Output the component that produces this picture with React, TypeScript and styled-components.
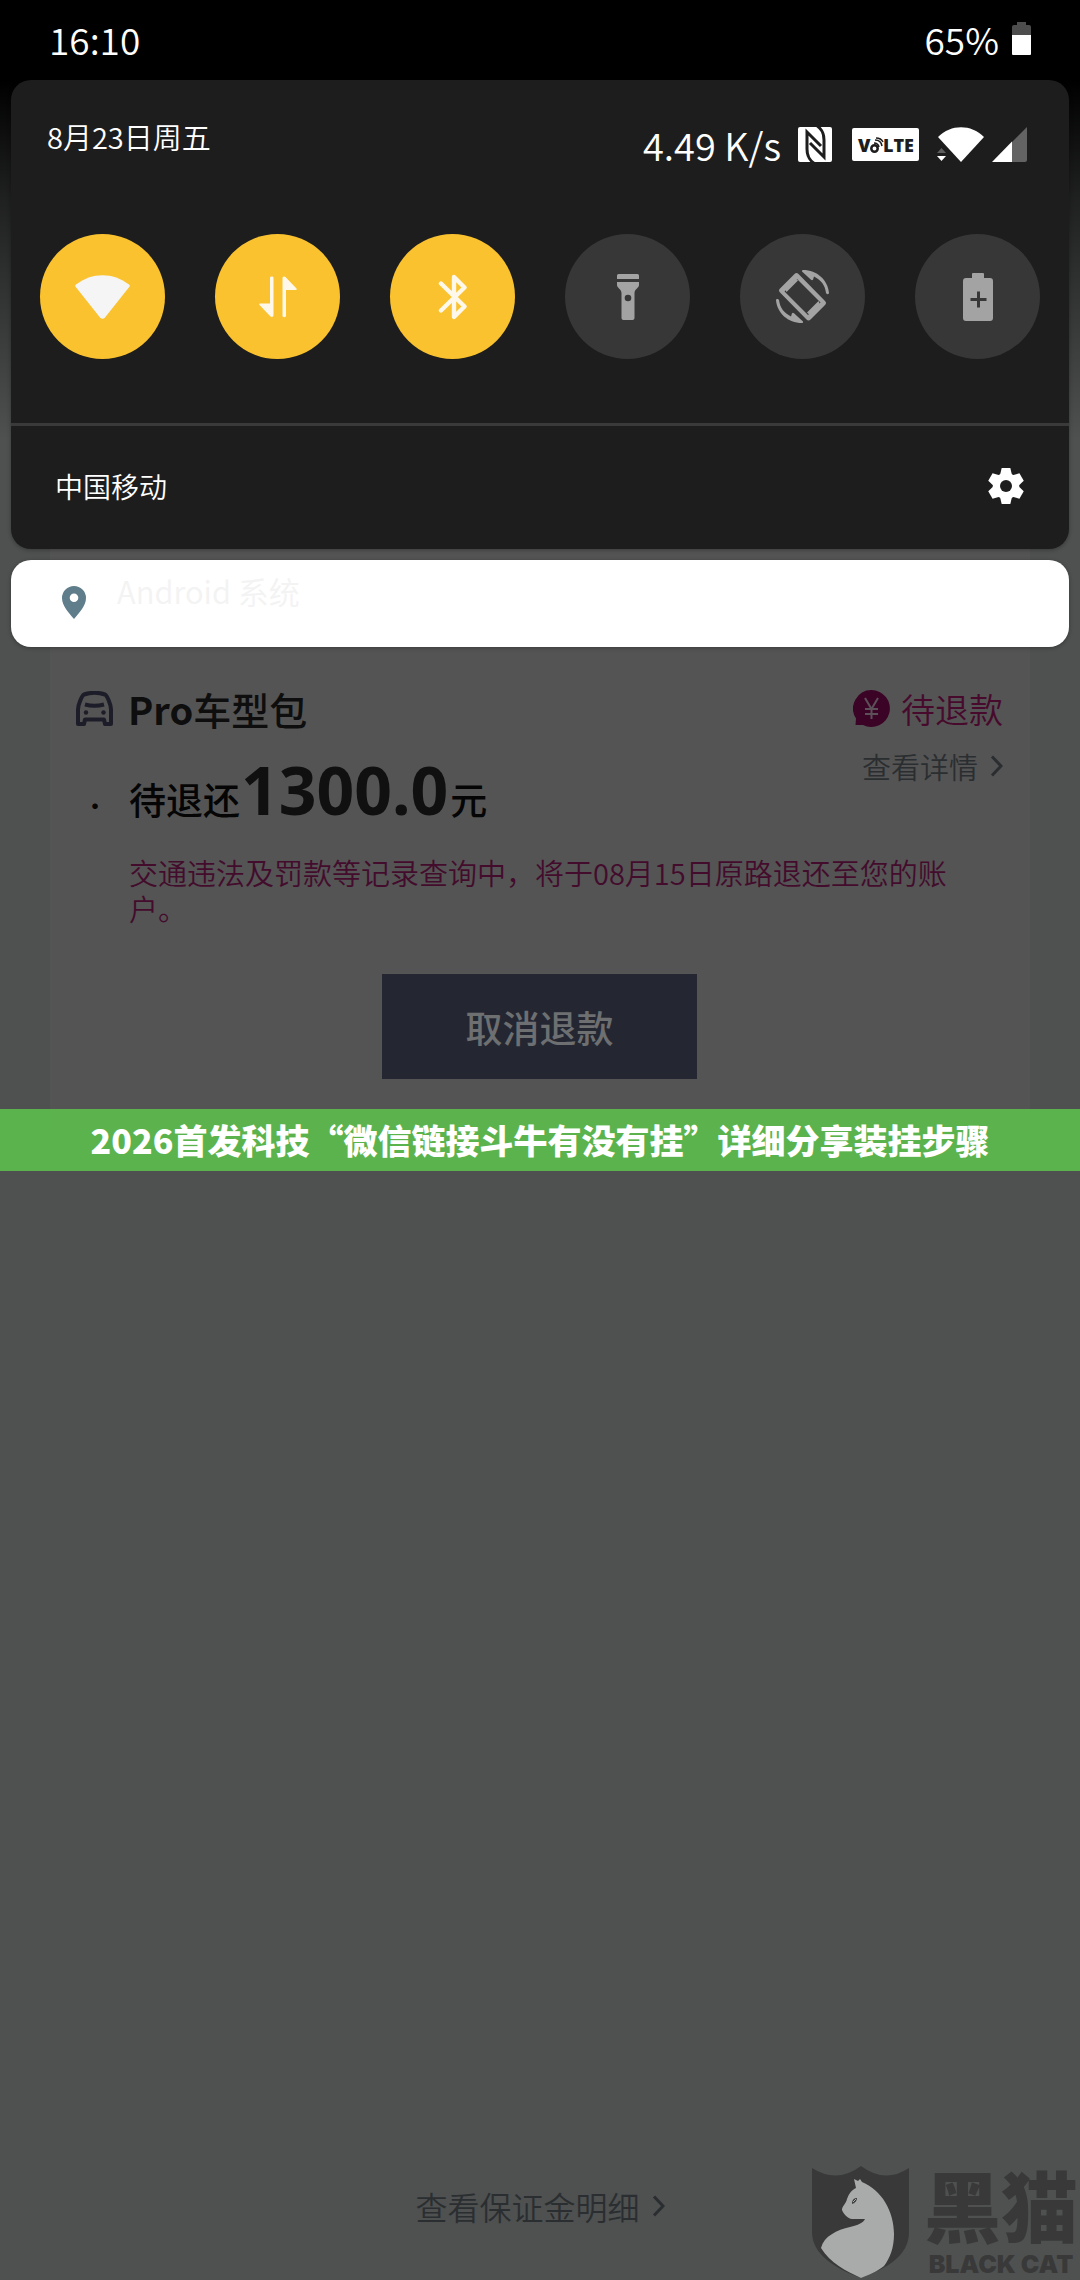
import React from "react";
import styled, { createGlobalStyle } from "styled-components";

const GlobalStyle = createGlobalStyle`
  *, *::before, *::after { box-sizing: border-box; }
  body {
    margin: 0;
    background: #4e5150;
    font-family: "Noto Sans CJK SC", "Noto Sans", sans-serif;
    font-weight: 350;
  }
  button { font: inherit; border: 0; padding: 0; cursor: pointer; }
  a { color: inherit; text-decoration: none; }
  h1, h2, p { margin: 0; font-weight: inherit; }
  svg { display: block; flex: none; }
`;

const Screen = styled.div`
  position: relative;
  min-height: 100vh;
  display: flex;
  flex-direction: column;
  overflow: hidden;
`;

/* ---------- system shade ---------- */

const Shade = styled.header`
  position: absolute;
  inset: 0 0 auto;
  z-index: 1;
  background: linear-gradient(#000 80px, rgba(0, 0, 0, 0.6) 200px, rgba(0, 0, 0, 0) 440px);
`;

const StatusBar = styled.div`
  height: 80px;
  padding: 0 49px 2px;
  display: flex;
  align-items: center;
  justify-content: space-between;
  font-size: 37px;
  color: #fff;
`;

const Inline = styled.div<{ $gap: number }>`
  display: flex;
  align-items: center;
  gap: ${(p) => p.$gap}px;
`;

const Panel = styled.section`
  margin: 0 11px;
  border-radius: 20px;
  background: #1d1d1d;
  color: #fff;
  box-shadow: 0 1px 4px rgba(0, 0, 0, 0.3);
`;

const PanelHead = styled.div`
  height: 154px;
  padding: 36px 42px 0 36px;
  display: flex;
  align-items: flex-start;
  justify-content: space-between;
`;

const DateText = styled.time`
  font-size: 29px;
  line-height: 40px;
`;

const NetworkRow = styled.div`
  display: flex;
  align-items: center;
  height: 56px;
`;

const Speed = styled.span`
  font-size: 38px;
  margin-right: 17px;
`;

const VolteBadge = styled.span`
  display: flex;
  margin: 0 18px 0 20px;
`;

const Tiles = styled.div`
  display: flex;
  justify-content: space-between;
  padding: 0 29px 64px;
`;

const Tile = styled.button<{ $on?: boolean }>`
  width: 125px;
  height: 125px;
  border-radius: 50%;
  display: grid;
  place-items: center;
  background: ${(p) => (p.$on ? "#fac22f" : "#373737")};
  color: ${(p) => (p.$on ? "#fdf8ea" : "#a3a3a3")};
`;

const PanelFoot = styled.div`
  height: 126px;
  padding: 0 45px 3px 44px;
  border-top: 3px solid #3a3a3a;
  display: flex;
  align-items: center;
  justify-content: space-between;
  font-size: 28px;
`;

const IconButton = styled.button`
  background: none;
  color: #fff;
`;

const Notification = styled.section`
  height: 87px;
  margin: 11px 11px 0;
  padding: 10px 51px;
  border-radius: 20px;
  background: #fff;
  box-shadow: 0 1px 4px rgba(0, 0, 0, 0.3);
  display: flex;
  gap: 31px;
  color: #f3f3f3;
  font-size: 31px;
  line-height: 42px;
  svg { margin-top: 16px; }
`;

/* ---------- app underneath ---------- */

const Main = styled.main`
  flex: 1;
  display: flex;
  flex-direction: column;
`;

const Card = styled.section`
  margin: 500px 50px 0;
  padding: 180px 27px 51px 26px;
  background: #545454;
`;

const CardHead = styled.div`
  display: flex;
  justify-content: space-between;
  height: 72px;
`;

const Title = styled.h1`
  display: flex;
  align-items: center;
  gap: 15px;
  height: 56px;
  font-size: 38px;
  font-weight: 500;
  color: #0e0e0e;
  b { font-weight: 700; }
`;

const Aside = styled.div`
  display: flex;
  flex-direction: column;
  align-items: flex-end;
`;

const Pending = styled.div`
  flex: none;
  display: flex;
  align-items: center;
  gap: 11px;
  height: 56px;
  font-size: 34px;
  color: #470a2d;
`;

const MoreLink = styled.a<{ $size: number }>`
  display: flex;
  align-items: center;
  gap: 12px;
  font-size: ${(p) => p.$size}px;
  line-height: 60px;
  color: #2b2e30;
`;

const Amount = styled.p`
  display: flex;
  align-items: baseline;
  height: 74px;
  font-size: 37px;
  line-height: 74px;
  font-weight: 500;
  color: #050505;
`;

const Bullet = styled.span`
  width: 53px;
  padding-left: 7px;
  font-size: 24px;
`;

const Figure = styled.strong`
  margin: 0 2px 0 1px;
  font-family: "Noto Sans", sans-serif;
  font-size: 66px;
  font-weight: 700;
  color: #101010;
`;

const Note = styled.p`
  margin: 28px 0 48px;
  padding: 0 45px 0 53px;
  font-size: 29px;
  line-height: 36px;
  color: #430c2c;
`;

const CancelButton = styled.button`
  display: block;
  width: 315px;
  height: 105px;
  margin: 0 auto;
  background: #242732;
  color: #6d6f71;
  font-size: 37px;
  font-weight: 500;
`;

const Banner = styled.h2`
  margin-top: -21px;
  height: 62px;
  background: rgba(92, 185, 76, 0.94);
  color: #fff;
  font-size: 34px;
  line-height: 62px;
  font-weight: 900;
  text-align: center;
  white-space: nowrap;
`;

const Footer = styled.footer`
  margin-top: auto;
  padding-bottom: 44px;
  display: flex;
  justify-content: center;
`;

const Watermark = styled.div`
  position: absolute;
  right: 2px;
  bottom: 0;
  display: flex;
  align-items: flex-end;
  gap: 14px;
  color: #393939;
  font-weight: 900;
`;

const Brand = styled.div`
  display: flex;
  flex-direction: column;
  align-items: center;
`;

const BrandName = styled.span`
  font-size: 77px;
  line-height: 90px;
`;

const BrandLatin = styled.span`
  font-family: Inter, "Open Sans", sans-serif;
  font-size: 25px;
  font-weight: 900;
  line-height: 31px;
`;

/* ---------- drawings ---------- */

const BatteryIcon = () => (
  <svg width="19" height="34" viewBox="0 0 19 34">
    <path d="M5 0h9v3h3a2 2 0 0 1 2 2v8H0V5a2 2 0 0 1 2-2h3z" fill="#4d4d4d" />
    <path d="M0 13h19v19a1 1 0 0 1-1 1H1a1 1 0 0 1-1-1z" fill="#fff" />
  </svg>
);

const NfcIcon = () => (
  <svg width="34" height="35" viewBox="0 0 34 35">
    <rect width="34" height="35" rx="2" fill="#fff" />
    <path d="M17 37C11 33 9 29 9 22V5l14 14M18-2c6 4 8 8 8 15v17L12 16" fill="none" stroke="#1d1d1d" strokeWidth="3" />
  </svg>
);

const VolteIcon = () => (
  <svg width="67" height="33" viewBox="0 0 67 33">
    <rect width="67" height="33" rx="2" fill="#fff" />
    <g fill="#1d1d1d" fontFamily="Open Sans, sans-serif" fontWeight="800" fontSize="18">
      <text x="6" y="24">V</text>
      <text x="31" y="24">LTE</text>
    </g>
    <g fill="none" stroke="#1d1d1d">
      <circle cx="22.500" cy="20.500" r="3.200" strokeWidth="2.500" />
      <path d="M22 15q4 0 5 4M23 12q6 0 7 6M24 10q5 0 7 4" strokeWidth="1.600" />
    </g>
  </svg>
);

const WifiStatusIcon = () => (
  <svg width="48" height="35" viewBox="0 0 48 35">
    <path d="M1 10C14-3 34-3 47 10L24 35z" fill="#fff" />
    <path d="M-1 27V19h6l6 8v9H-1z" fill="#1d1d1d" />
    <path d="M0 26l4.500-5L9 26z" fill="#5d5d5d" />
    <path d="M0 29h9l-4.500 5z" fill="#fff" />
  </svg>
);

const SignalIcon = () => (
  <svg width="35" height="35" viewBox="0 0 35 35">
    <path d="M20 15L35 0v33a2 2 0 0 1-2 2H20z" fill="#636363" />
    <path d="M20 14.500V35H0z" fill="#fff" />
  </svg>
);

const WifiIcon = () => (
  <svg width="55" height="44" viewBox="0 0 55 44">
    <path d="M1 9.500C17-3 38-3 54 9.500c1 .8 1 1.500.4 2.300L30 42.500c-1.500 1.700-3.500 1.700-5 0L.6 11.800C0 11 0 10.300 1 9.500z" fill="#f5f5f5" />
  </svg>
);

const DataIcon = () => (
  <svg width="38" height="42" viewBox="0 0 38 42" fill="currentColor">
    <path d="M11 1.500C11 0 14.500 0 14.500 1.500V39c0 2-2 2.500-3.200 1.200L.5 29c-.8-1 0-1.600 1-1.600H11z" />
    <path d="M27 40c0 1.500-3.500 1.500-3.500 0V2.500c0-2 2-2.500 3.200-1.200L37.500 12.500c.8 1 0 1.600-1 1.600H27z" />
  </svg>
);

const BluetoothIcon = () => (
  <svg width="30" height="46" viewBox="0 0 30 46" fill="none" stroke="currentColor" strokeWidth="4.400" strokeLinecap="round" strokeLinejoin="round">
    <path d="M3 9.500L26.500 32.500 16 43V3L26.500 13.500 3 36.500" />
  </svg>
);

const TorchIcon = () => (
  <svg width="22" height="46" viewBox="0 0 22 46">
    <path d="M1.500 0h19A1.500 1.500 0 0 1 22 1.500V5H0V1.500A1.500 1.500 0 0 1 1.500 0zM0 8h22v3c0 3-4.500 4-4.500 8v25a2 2 0 0 1-2 2h-9a2 2 0 0 1-2-2V19C4.500 15 0 14 0 11z" fill="currentColor" />
    <circle cx="11" cy="24" r="3.300" fill="#373737" />
  </svg>
);

const RotateIcon = () => (
  <svg width="53" height="53" viewBox="0 0 53 53" fill="currentColor">
    <path fillRule="evenodd" d="M18.500 4q2-2 4 0L49 31q2 2 0 4L34.500 49.500q-2 2-4 0L4 22.500q-2-2 0-4zM21 9L8.500 21.500 32 45 44.500 32.500z" />
    <path d="M8 17L18 7l4 3.500L10.500 22zM45 36L35 46l-4-3.500L42.500 31z" />
    <path d="M27 0C41 0 52 10 53 23c0 1.500-2.500 1.500-3 0-1-8-5-13-12-16.500l-1 3.300q-1 .8-2 0L26 1.500Q25.500 0 27 0z" />
    <path d="M26 53C12 53 1 43 0 30c0-1.500 2.500-1.500 3 0 1 8 5 13 12 16.500l1-3.300q1-.8 2 0l9 8.300Q27.500 53 26 53z" />
  </svg>
);

const SaverIcon = () => (
  <svg width="30" height="48" viewBox="0 0 30 48">
    <path d="M9 1q0-1 1-1h10q1 0 1 1v4h6a3 3 0 0 1 3 3v37a3 3 0 0 1-3 3H3a3 3 0 0 1-3-3V8a3 3 0 0 1 3-3h6z" fill="currentColor" />
    <path d="M15.500 18.500v16M7.500 26.500h16" stroke="#373737" strokeWidth="3" />
  </svg>
);

const GearIcon = () => (
  <svg width="36" height="36" viewBox="-18 -18 36 36">
    <circle r="13.200" fill="currentColor" />
    {[0, 60, 120].map((angle) => (
      <path key={angle} transform={`rotate(${angle})`} d="M-4.300-18h8.600l1.700 7V11l-1.700 7h-8.600L-6 11V-11z" fill="currentColor" />
    ))}
    <circle r="6" fill="#1d1d1d" />
  </svg>
);

const PinIcon = () => (
  <svg width="24" height="33" viewBox="0 0 24 33">
    <path fillRule="evenodd" d="M12 0a12 12 0 0 0-12 12c0 8 7 15 12 21 5-6 12-13 12-21A12 12 0 0 0 12 0zm0 7.500a4.300 4.300 0 1 1 0 8.600 4.300 4.300 0 0 1 0-8.600z" fill="#5f7d8b" />
  </svg>
);

const CarIcon = () => (
  <svg width="37" height="35" viewBox="0 0 37 35" fill="none" stroke="#1c1d28" strokeWidth="4" strokeLinejoin="round">
    <path d="M8 3.500Q18.500 0 29 3.500c2 1 6 10 6 15V33h-6l-1-4.500H9L8 33H2V18.500c0-5 4-14 6-15z" />
    <path d="M9 13.500q9.500 2.500 19 0" />
    <circle cx="10" cy="21.500" r="2.200" fill="#1c1d28" stroke="none" />
    <circle cx="27.500" cy="21.500" r="2.200" fill="#1c1d28" stroke="none" />
  </svg>
);

const YenIcon = () => (
  <svg width="37" height="37" viewBox="0 0 37 37">
    <path d="M18.500 0a18.500 18.500 0 1 1-8.500 35H2.500l.5-6.500A18.500 18.500 0 0 1 18.500 0z" fill="#3b0427" />
    <path d="M12 8l6.500 11L25 8M18.500 19v10M12 19h13M12 24h13" fill="none" stroke="#5c5059" strokeWidth="2" />
  </svg>
);

const Chevron = () => (
  <svg width="13" height="22" viewBox="0 0 13 22" fill="none" stroke="currentColor" strokeWidth="3">
    <path d="M2 1.500L11 11 2 20.500" />
  </svg>
);

const CatShield = () => (
  <svg width="98" height="114" viewBox="0 0 98 114">
    <path d="M0 2Q25 18 49 0q24 18 48 2v64c0 24-22 36-48 46C22 102 0 88 0 66z" fill="#393939" />
    <path d="M42 13l4 2 2-2 2 3c20 8 32 30 32 52 0 14-4 24-10 32-6 5-15 9-23 12C34 105 18 97 9 82c3-12 16-18 29-21 8-2 13-4 15-8H40c-4 0-9-6-10-9 0-4 4-6 5-11 2-6 5-9 9-11z" fill="#a9aaaa" />
    <path d="M40 38c0-4 2-6 5-6 0 3-2 5-5 6zm2-4q1 2 0 4" fill="#393939" />
    <path d="M41 36l3-3" stroke="#a9aaaa" />
  </svg>
);

export default function App() {
  return (
    <Screen>
      <GlobalStyle />
      <Shade>
        <StatusBar>
          <time>16:10</time>
          <Inline $gap={13}>
            <span>65%</span>
            <BatteryIcon />
          </Inline>
        </StatusBar>
        <Panel>
          <PanelHead>
            <DateText>8月23日周五</DateText>
            <NetworkRow>
              <Speed>4.49 K/s</Speed>
              <NfcIcon />
              <VolteBadge><VolteIcon /></VolteBadge>
              <Inline $gap={7}>
                <WifiStatusIcon />
                <SignalIcon />
              </Inline>
            </NetworkRow>
          </PanelHead>
          <Tiles>
            <Tile $on aria-label="WLAN"><WifiIcon /></Tile>
            <Tile $on aria-label="移动数据"><DataIcon /></Tile>
            <Tile $on aria-label="蓝牙"><BluetoothIcon /></Tile>
            <Tile aria-label="手电筒"><TorchIcon /></Tile>
            <Tile aria-label="自动旋转"><RotateIcon /></Tile>
            <Tile aria-label="省电模式"><SaverIcon /></Tile>
          </Tiles>
          <PanelFoot>
            <span>中国移动</span>
            <IconButton aria-label="设置"><GearIcon /></IconButton>
          </PanelFoot>
        </Panel>
        <Notification>
          <PinIcon />
          <span>Android 系统</span>
        </Notification>
      </Shade>

      <Main>
        <Card>
          <CardHead>
            <Title>
              <CarIcon />
              <span><b>Pro</b>车型包</span>
            </Title>
            <Aside>
              <Pending>
                <YenIcon />
                <span>待退款</span>
              </Pending>
              <MoreLink href="#detail" $size={29}>
                <span>查看详情</span>
                <Chevron />
              </MoreLink>
            </Aside>
          </CardHead>
          <Amount>
            <Bullet>·</Bullet>
            <span>待退还</span>
            <Figure>1300.0</Figure>
            <span>元</span>
          </Amount>
          <Note>交通违法及罚款等记录查询中，将于08月15日原路退还至您的账户。</Note>
          <CancelButton>取消退款</CancelButton>
        </Card>
        <Banner>2026首发科技“微信链接斗牛有没有挂”详细分享装挂步骤</Banner>
        <Footer>
          <MoreLink href="#deposit" $size={32}>
            <span>查看保证金明细</span>
            <Chevron />
          </MoreLink>
        </Footer>
      </Main>

      <Watermark>
        <CatShield />
        <Brand>
          <BrandName>黑猫</BrandName>
          <BrandLatin>BLACK CAT</BrandLatin>
        </Brand>
      </Watermark>
    </Screen>
  );
}
